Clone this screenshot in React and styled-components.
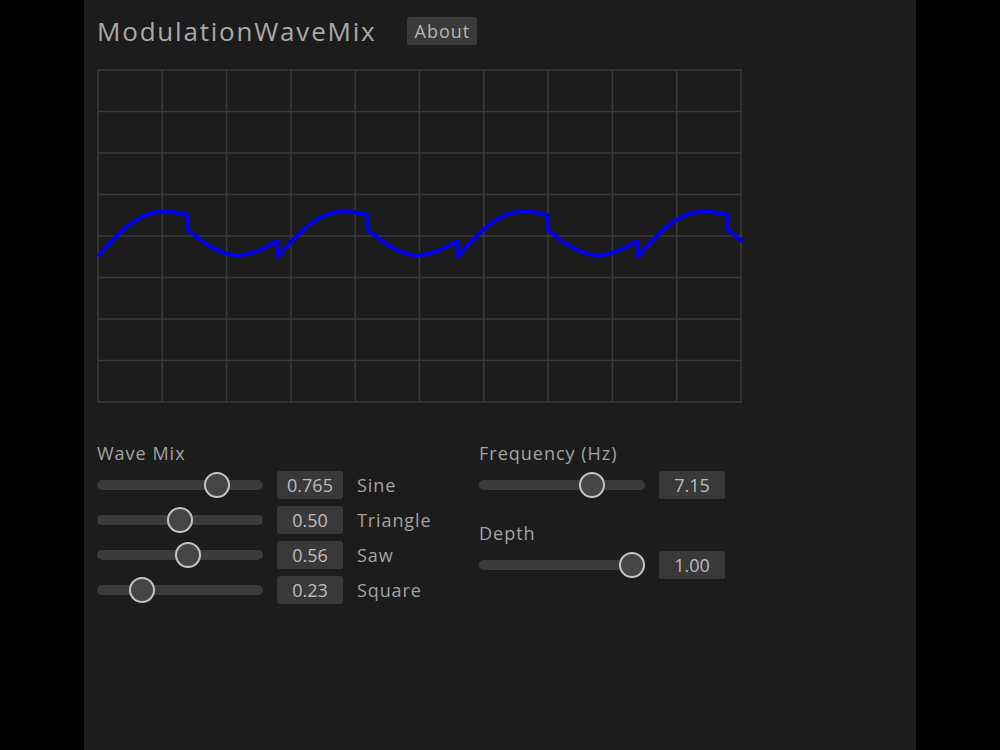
import React from "react";
import styled, { createGlobalStyle } from "styled-components";

const Global = createGlobalStyle`
  html, body { margin: 0; padding: 0; background: #000; }
  body { font-family: "Open Sans", "Noto Sans", sans-serif; }
`;

const Panel = styled.div`
  width: 832px;
  min-height: 750px;
  margin: 0 auto;
  background: #1c1c1c;
  box-sizing: border-box;
  padding: 9px 0 0 13px;
  display: flex;
  flex-direction: column;
`;

const Header = styled.div`
  display: flex;
  align-items: center;
  gap: 30px;
  height: 44px;
`;

const Title = styled.h1`
  margin: 0;
  font-size: 26px;
  font-weight: 400;
  color: #a9a9a9;
  letter-spacing: 1.8px;
`;

const AboutButton = styled.button`
  font-family: inherit;
  font-size: 18px;
  letter-spacing: 1px;
  color: #b4b4b4;
  background: #3a3a3a;
  border: none;
  border-radius: 3px;
  padding: 0 7px 0 8px;
  height: 28px;
  line-height: 28px;
`;

const ChartBox = styled.div`
  margin-top: 16px;
  width: 646px;
  height: 334px;
`;

const Controls = styled.div`
  margin-top: 38px;
  display: grid;
  grid-template-columns: 382px 300px;
`;

const Column = styled.div`
  display: flex;
  flex-direction: column;
`;

const GroupLabel = styled.div`
  font-size: 18px;
  line-height: 24px;
  letter-spacing: 1px;
  color: #a3a3a3;
  margin-top: ${(p) => p.$top || 0}px;
  margin-bottom: 2px;
`;

const Row = styled.div`
  display: flex;
  align-items: center;
  height: 35px;
`;

const Track = styled.div`
  position: relative;
  width: 166px;
  height: 10px;
  border-radius: 5px;
  background: #3b3b3b;
  flex: none;
`;

const Thumb = styled.div`
  position: absolute;
  top: 50%;
  width: 22px;
  height: 22px;
  margin: -13px 0 0 -13px;
  border-radius: 50%;
  border: 2px solid #c4c4c4;
  background: #454545;
`;

const ValueBox = styled.div`
  margin-left: 14px;
  width: 66px;
  height: 28px;
  line-height: 28px;
  border-radius: 3px;
  background: #393939;
  color: #bdbdbd;
  font-size: 18px;
  text-align: center;
  flex: none;
`;

const RowLabel = styled.span`
  margin-left: 14px;
  font-size: 18px;
  letter-spacing: 0.9px;
  color: #a3a3a3;
`;

function Slider({ value, min = 0, max = 1 }) {
  const f = (value - min) / (max - min);
  const left = 13 + f * 140;
  return (
    <Track>
      <Thumb style={{ left: `${left}px` }} />
    </Track>
  );
}

const W = 645;
const H = 333;

function wavePath() {
  const P = 180;
  const s = 19.5, t = 13, c = 15.5, d = 7.5;
  const pts = [];
  for (let x = 0; x <= W; x += 0.5) {
    const p = ((x % P) + P) % P / P;
    const sin = Math.sin(2 * Math.PI * p);
    const tri = p < 0.5 ? -1 + 4 * p : 3 - 4 * p;
    const saw = 2 * p - 1;
    const sq = p < 0.5 ? 1 : -1;
    const v = s * sin + t * tri + c * saw + d * sq;
    const y = H / 2 - v;
    pts.push(`${(x + 1).toFixed(1)},${y.toFixed(1)}`);
  }
  return "M" + pts.join(" L");
}

function Chart() {
  const vs = [];
  for (let i = 0; i <= 10; i++) {
    const x = 1 + (i * (W - 2)) / 10;
    vs.push(<line key={"v" + i} x1={x} y1={1} x2={x} y2={H} stroke="#3a3a3a" strokeWidth="1.5" />);
  }
  const hs = [];
  for (let j = 0; j <= 8; j++) {
    const y = 1 + (j * (H - 1)) / 8;
    hs.push(<line key={"h" + j} x1={1} y1={y} x2={W} y2={y} stroke="#3a3a3a" strokeWidth="1.5" />);
  }
  return (
    <svg width={W + 1} height={H + 1} viewBox={`0 0 ${W + 1} ${H + 1}`}>
      {vs}
      {hs}
      <path d={wavePath()} fill="none" stroke="#0000ee" strokeWidth="4" strokeLinejoin="round" />
    </svg>
  );
}

const mix = [
  { name: "Sine", value: 0.765, text: "0.765" },
  { name: "Triangle", value: 0.5, text: "0.50" },
  { name: "Saw", value: 0.56, text: "0.56" },
  { name: "Square", value: 0.23, text: "0.23" },
];

export default function App() {
  return (
    <>
      <Global />
      <Panel>
        <Header>
          <Title>ModulationWaveMix</Title>
          <AboutButton>About</AboutButton>
        </Header>
        <ChartBox>
          <Chart />
        </ChartBox>
        <Controls>
          <Column>
            <GroupLabel>Wave Mix</GroupLabel>
            {mix.map((m) => (
              <Row key={m.name}>
                <Slider value={m.value} />
                <ValueBox>{m.text}</ValueBox>
                <RowLabel>{m.name}</RowLabel>
              </Row>
            ))}
          </Column>
          <Column>
            <GroupLabel>Frequency (Hz)</GroupLabel>
            <Row>
              <Slider value={7.15} min={0} max={10} />
              <ValueBox>7.15</ValueBox>
            </Row>
            <GroupLabel $top={19}>Depth</GroupLabel>
            <Row>
              <Slider value={1} />
              <ValueBox>1.00</ValueBox>
            </Row>
          </Column>
        </Controls>
      </Panel>
    </>
  );
}
